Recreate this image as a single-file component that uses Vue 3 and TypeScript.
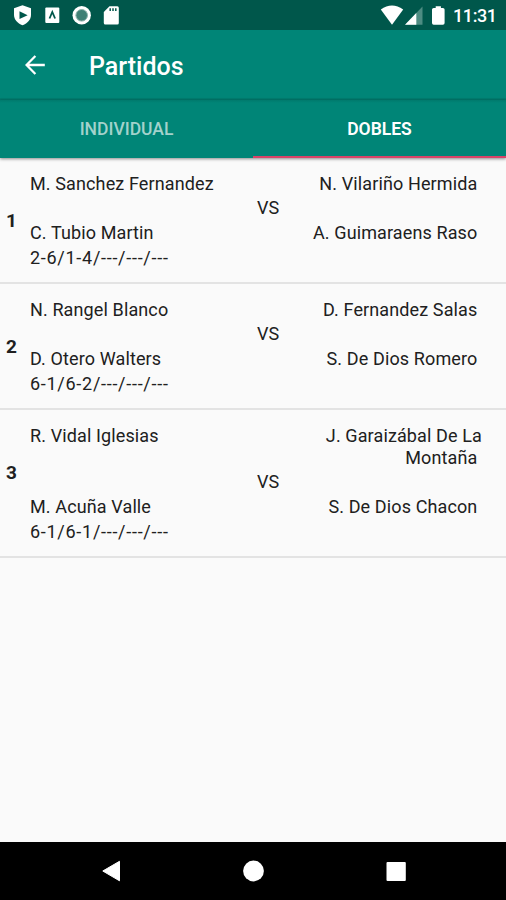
<script setup lang="ts">
interface Match {
  id: number
  home: [string, string]
  away: [string, string]
  score: string
}

const tabs = [
  { label: 'INDIVIDUAL', active: false },
  { label: 'DOBLES', active: true },
]

const matches: Match[] = [
  { id: 1, home: ['M. Sanchez Fernandez', 'C. Tubio Martin'], away: ['N. Vilariño Hermida', 'A. Guimaraens Raso'], score: '2-6/1-4/---/---/---' },
  { id: 2, home: ['N. Rangel Blanco', 'D. Otero Walters'], away: ['D. Fernandez Salas', 'S. De Dios Romero'], score: '6-1/6-2/---/---/---' },
  { id: 3, home: ['R. Vidal Iglesias', 'M. Acuña Valle'], away: ['J. Garaizábal De La Montaña', 'S. De Dios Chacon'], score: '6-1/6-1/---/---/---' },
]
</script>

<template>
  <div class="screen">
    <header class="status">
      <svg class="notifications" width="130" height="30" viewBox="0 0 130 30">
        <path fill="#fff" d="M22.5 5.3 31 8.2v6.6c0 5-3.4 8.4-8.5 10.5C17.400 23.200 14 19.800 14 14.800V8.200z" />
        <path fill="#00574b" d="M19.500 11.300 27.600 15.300 19.500 19z" />
        <rect x="45.300" y="7.500" width="14" height="15.500" rx="1" fill="#fff" />
        <path fill="none" stroke="#00574b" stroke-width="1.800" d="M49.500 18.500 52.300 12l2.800 6.500" />
        <circle cx="81.700" cy="15.300" r="9.200" fill="#fff" />
        <circle cx="81.700" cy="15.300" r="5.800" fill="#3f8075" stroke="#8bb2ab" stroke-width="1" />
        <path fill="#fff" d="M109.500 6.300h7.800q1.500 0 1.500 1.500v15.200q0 1.500-1.500 1.500h-12q-1.500 0-1.500-1.500V12z" />
        <path stroke="#00574b" stroke-width="1.500" d="M110.200 8.300v2.700M113 8.300v2.700M115.800 8.300v2.700" />
      </svg>
      <div class="system">
        <svg width="66" height="30" viewBox="380 0 66 30">
          <path fill="#fff" d="M380.800 9.500Q392 1.500 403.200 9.500L392 24.700z" />
          <path fill="#4d8c82" d="M422.500 6.500V24.700H405z" />
          <path fill="#fff" d="M416.300 13V24.700H405z" />
          <path fill="#fff" d="M435.700 6.200h5.200v1.700h2q1.700 0 1.700 1.700v13.500q0 1.700-1.700 1.700h-9.200q-1.700 0-1.700-1.700V9.600q0-1.700 1.700-1.700h2z" />
        </svg>
        <span class="clock">11:31</span>
      </div>
    </header>

    <div class="toolbar">
      <svg class="back" width="20" height="20" viewBox="0 0 20 20">
        <path d="M19.800 10H2M10.400 1 1.500 10l8.900 9" fill="none" stroke="#fff" stroke-width="2.300" />
      </svg>
      <h1 class="title">Partidos</h1>
    </div>

    <nav class="tabs">
      <button v-for="tab in tabs" :key="tab.label" class="tab" :class="{ active: tab.active }">{{ tab.label }}</button>
    </nav>

    <main class="list">
      <article v-for="match in matches" :key="match.id" class="match">
        <span class="number">{{ match.id }}</span>
        <span class="home first">{{ match.home[0] }}</span>
        <span class="away first">{{ match.away[0] }}&nbsp;</span>
        <span class="versus">VS</span>
        <span class="home second">{{ match.home[1] }}</span>
        <span class="away second">{{ match.away[1] }}&nbsp;</span>
        <span class="score">{{ match.score }}</span>
      </article>
    </main>

    <footer class="navigation">
      <svg width="506" height="58" viewBox="0 0 506 58">
        <path fill="#fff" stroke="#fff" stroke-linejoin="round" d="M119.500 19.300v19.500L102.800 29z" />
        <circle cx="253.500" cy="29" r="10.400" fill="#fff" />
        <rect x="386.500" y="20" width="19.300" height="19" rx="1" fill="#fff" />
      </svg>
    </footer>
  </div>
</template>

<style>
body {
  margin: 0;
}
</style>

<style scoped>
.screen {
  display: flex;
  flex-direction: column;
  width: 506px;
  height: 900px;
  overflow: hidden;
  background: #fafafa;
  color: #202020;
  font-family: Roboto, sans-serif;
}

.status {
  display: flex;
  justify-content: space-between;
  flex: 0 0 30px;
  height: 30px;
  background: #00574b;
}

.system {
  display: flex;
  align-items: center;
  padding-right: 9px;
}

.clock {
  width: 44px;
  margin-left: 7px;
  color: #fff;
  font-size: 18px;
  font-weight: 500;
  letter-spacing: -0.4px;
  line-height: 28px;
  padding-top: 2px;
  white-space: nowrap;
}

.toolbar {
  display: flex;
  align-items: center;
  flex: 0 0 70px;
  box-sizing: border-box;
  padding-left: 25px;
  background: linear-gradient(#008577 0 68px, #007367 69px, #007a6d 70px);
}

.back {
  margin-top: -1px;
}

.title {
  margin: 3px 0 0 44px;
  color: #fff;
  font-size: 25px;
  font-weight: 500;
  line-height: 30px;
}

.tabs {
  display: flex;
  flex: 0 0 58px;
  background: linear-gradient(#007a6d, #008577 3px);
  box-shadow: 0 1px 3px rgba(0, 0, 0, 0.45);
}

.tab {
  flex: 1;
  padding: 2px 0 0;
  border: 0;
  border-bottom: 2px solid transparent;
  background: none;
  color: #a3d2cc;
  font-family: inherit;
  font-size: 17.5px;
  font-weight: 500;
}

.tab.active {
  border-bottom-color: #d94368;
  color: #fff;
  font-weight: 600;
}

.list {
  flex: 1;
}

.match {
  display: grid;
  grid-template-columns: 30px 220px 36px 196px;
  grid-template-rows: auto 27px 22px 21px;
  box-sizing: border-box;
  padding: 15px 24px 17px 0;
  border-bottom: 2px solid #e3e3e3;
  font-size: 18px;
  line-height: 22px;
  letter-spacing: 0.12px;
}

.number {
  grid-area: 1 / 1 / 5 / 2;
  padding: 37px 0 0 6px;
  font-size: 19px;
  font-weight: 700;
}

.home {
  grid-column: 2;
}

.away {
  grid-column: 4;
  text-align: right;
}

.first {
  grid-row: 1;
}

.second {
  grid-row: 3;
}

.versus {
  grid-area: 2 / 3;
  padding-left: 7px;
  line-height: 25px;
  letter-spacing: 0;
}

.score {
  grid-area: 4 / 2;
  height: 21px;
  padding-top: 3px;
  box-sizing: border-box;
  letter-spacing: 0.72px;
}

.navigation {
  flex: 0 0 58px;
  background: #000;
}

.navigation svg {
  display: block;
}
</style>
